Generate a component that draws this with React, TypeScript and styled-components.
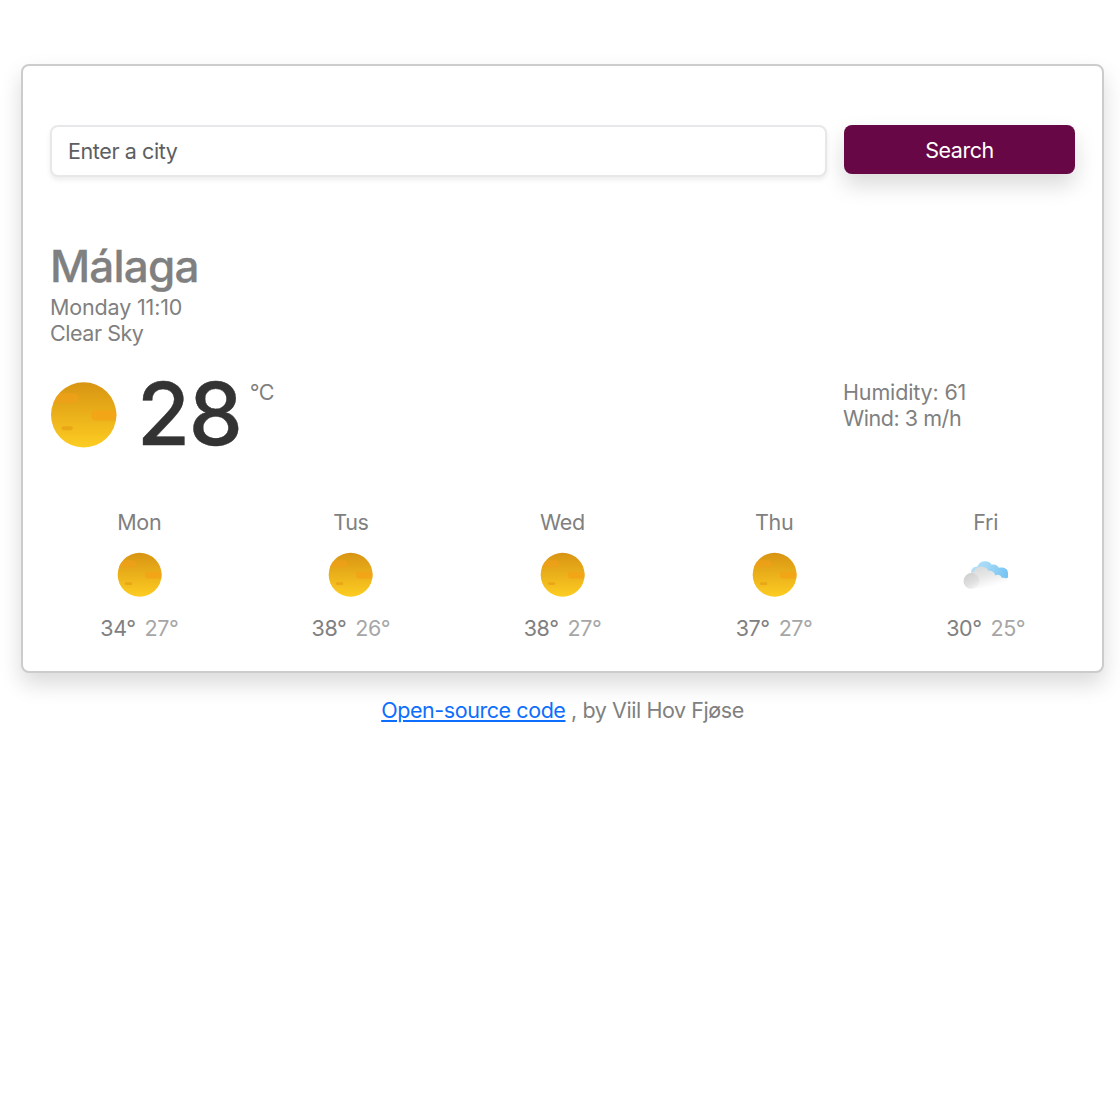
import React from "react";
import styled, { createGlobalStyle } from "styled-components";

const GlobalStyle = createGlobalStyle`
  *, *::before, *::after { box-sizing: border-box; }
  body {
    margin: 0;
    background: #fff;
    color: #808080;
    font-family: Inter, "Liberation Sans", sans-serif;
    font-size: 21.5px;
    line-height: 26px;
  }
`;

const Page = styled.div`
  padding: 64px 16px 0 21px;
`;

const Card = styled.main`
  height: 609px;
  padding: 59px 27px 0;
  border: 2px solid #ccc;
  border-radius: 8px;
  background: #fff;
  box-shadow: 0 11px 22px rgba(0, 0, 0, 0.15);
`;

const SearchForm = styled.form`
  display: grid;
  grid-template-columns: 777px 231px;
  justify-content: space-between;
  align-items: start;
`;

const CityInput = styled.input`
  height: 52px;
  padding: 0 16px;
  border: 2px solid #e8e8ea;
  border-radius: 8px;
  background: #fff;
  box-shadow: 0 3px 5px rgba(0, 0, 0, 0.075);
  font: inherit;
  font-size: 21.5px;
  letter-spacing: -0.4px;
  outline: none;
  &::placeholder { color: #5c5e62; opacity: 1; }
`;

const SearchButton = styled.button`
  height: 49px;
  padding: 1px 0 0;
  border: 0;
  border-radius: 8px;
  background: #670745;
  box-shadow: 0 11px 22px rgba(0, 0, 0, 0.15);
  color: #fff;
  font: inherit;
  font-size: 21.5px;
  letter-spacing: -0.45px;
`;

const Overview = styled.section`
  margin-top: 62px;
`;

const City = styled.h1`
  margin: 0 0 1px;
  font-size: 44px;
  font-weight: 500;
  line-height: 54px;
  letter-spacing: -0.8px;
  -webkit-text-stroke: 0.3px currentColor;
`;

const Details = styled.ul`
  margin: 0;
  padding: 0;
  list-style: none;
  letter-spacing: -0.15px;
`;

const Detail = styled.li<{ $tight?: boolean }>`
  letter-spacing: ${({ $tight }) => ($tight ? "-0.45px" : "inherit")};
`;

const Current = styled.section`
  display: grid;
  grid-template-columns: 793px 1fr;
  margin-top: 33px;
`;

const Temperature = styled.div`
  display: flex;
  align-items: flex-start;
`;

const CurrentIcon = styled.div`
  display: flex;
  padding-top: 2px;
`;

const Degrees = styled.strong`
  margin-left: 20px;
  color: #333;
  font-size: 86px;
  font-weight: 500;
  line-height: 70px;
  letter-spacing: -1.2px;
  -webkit-text-stroke: 0.4px currentColor;
`;

const Unit = styled.span`
  margin-left: 8px;
  letter-spacing: -0.5px;
`;

const Forecast = styled.section`
  display: grid;
  grid-template-columns: repeat(5, 1fr);
  column-gap: 33px;
  margin-top: 60px;
  text-align: center;
  letter-spacing: -0.3px;
`;

const Day = styled.div`
  display: flex;
  flex-direction: column;
  align-items: center;
`;

const DayIcon = styled.div`
  display: flex;
  margin: 17px 0 18px;
`;

const Range = styled.div`
  display: flex;
  gap: 9px;
  letter-spacing: -0.45px;
`;

const Low = styled.span`
  color: #a6a6a6;
`;

const Footer = styled.footer`
  margin-top: 24px;
  text-align: center;
  letter-spacing: -0.43px;
`;

const SourceLink = styled.a`
  color: #0d6efd;
  text-decoration: underline;
`;

function Sun({ size, id }: { size: number; id: string }) {
  return (
    <svg width={size} height={size} viewBox="0 0 66 66" aria-hidden="true">
      <defs>
        <linearGradient id={`sun-${id}`} x1="0" y1="0" x2="0" y2="1">
          <stop offset="0" stopColor="#d89413" />
          <stop offset="1" stopColor="#fdcd22" />
        </linearGradient>
        <clipPath id={`disc-${id}`}>
          <circle cx="33.2" cy="33.4" r="32.2" />
        </clipPath>
      </defs>
      <circle cx="33.2" cy="33.4" r="32.2" fill={`url(#sun-${id})`} />
      <g clipPath={`url(#disc-${id})`}>
        <rect x="-6" y="12" width="34" height="10" rx="4" fill="#f0a01a" opacity="0.7" />
        <rect x="41" y="29" width="36" height="10" rx="4" fill="#f3a117" opacity="0.75" />
        <rect x="11.5" y="44.5" width="11" height="4" rx="2" fill="#e8a214" opacity="0.85" />
      </g>
    </svg>
  );
}

function Clouds({ size }: { size: number }) {
  return (
    <svg width={size} height={size} viewBox="0 0 44 44" aria-hidden="true">
      <defs>
        <linearGradient id="cloud-blue" gradientUnits="userSpaceOnUse" x1="10" y1="10" x2="42" y2="22">
          <stop offset="0" stopColor="#b5dff6" />
          <stop offset="0.4" stopColor="#a2d8f6" />
          <stop offset="1" stopColor="#78c5f3" />
        </linearGradient>
        <linearGradient id="cloud-gray" gradientUnits="userSpaceOnUse" x1="14" y1="14" x2="20" y2="36">
          <stop offset="0" stopColor="#d8d9da" />
          <stop offset="0.45" stopColor="#e6e6e6" />
          <stop offset="1" stopColor="#ffffff" />
        </linearGradient>
        <linearGradient id="cloud-puff" x1="0.2" y1="0.1" x2="0.7" y2="1">
          <stop offset="0" stopColor="#d0d0d0" />
          <stop offset="0.6" stopColor="#e0e0e0" />
          <stop offset="1" stopColor="#f5f5f5" />
        </linearGradient>
      </defs>
      <path
        d="M8 21C7.500 17 10 14 14 14.500C16 7.500 26 7.500 28 12.500C31 11.500 34 13 35 15.500C40 14 44 16.500 44 20.500V25L36 29H15Z"
        fill="url(#cloud-blue)"
      />
      <path
        d="M5 22C8 19.500 10 20 11 18.500C13 13 23 13 25 18.500C28 18 31 20 31.500 23C34 21.500 37 22.500 38 25.500C41 24.500 44 26.500 44 28.500V32C43 35.500 39 35.500 34 35.500H7Z"
        fill="url(#cloud-gray)"
      />
      <circle cx="8.300" cy="28.400" r="7.800" fill="url(#cloud-puff)" />
    </svg>
  );
}

const forecast = [
  { day: "Mon", high: 34, low: 27, icon: "sun" },
  { day: "Tus", high: 38, low: 26, icon: "sun" },
  { day: "Wed", high: 38, low: 27, icon: "sun" },
  { day: "Thu", high: 37, low: 27, icon: "sun" },
  { day: "Fri", high: 30, low: 25, icon: "clouds" },
];

export default function App() {
  return (
    <Page>
      <GlobalStyle />
      <Card>
        <SearchForm onSubmit={(event: React.FormEvent) => event.preventDefault()}>
          <CityInput type="text" placeholder="Enter a city" />
          <SearchButton type="submit">Search</SearchButton>
        </SearchForm>
        <Overview>
          <City>Málaga</City>
          <Details>
            <Detail>Monday 11:10</Detail>
            <Detail $tight>Clear Sky</Detail>
          </Details>
        </Overview>
        <Current>
          <Temperature>
            <CurrentIcon>
              <Sun size={67} id="now" />
            </CurrentIcon>
            <Degrees>28</Degrees>
            <Unit>°C</Unit>
          </Temperature>
          <Details>
            <Detail>Humidity: 61</Detail>
            <Detail $tight>Wind: 3 m/h</Detail>
          </Details>
        </Current>
        <Forecast>
          {forecast.map(({ day, high, low, icon }) => (
            <Day key={day}>
              <span>{day}</span>
              <DayIcon>{icon === "sun" ? <Sun size={45} id={day} /> : <Clouds size={45} />}</DayIcon>
              <Range>
                <span>{high}°</span>
                <Low>{low}°</Low>
              </Range>
            </Day>
          ))}
        </Forecast>
      </Card>
      <Footer>
        <SourceLink href="#">Open-source code</SourceLink> , by Viil Hov Fjøse
      </Footer>
    </Page>
  );
}
